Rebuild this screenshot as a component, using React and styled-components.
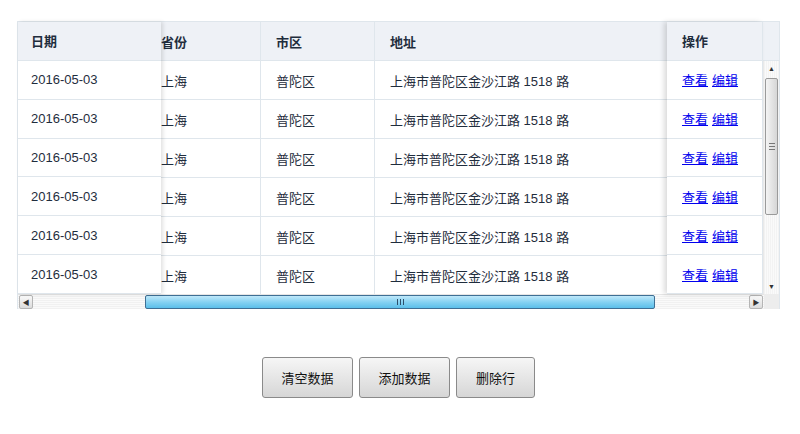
import React from "react"
import styled, { createGlobalStyle } from "styled-components"

const GlobalStyle = createGlobalStyle`
    body {
        margin: 0;
        background: #fff;
        font-family: "Liberation Sans", "Noto Sans CJK SC", sans-serif;
        color: #1f2d3d;
    }
`

const Page = styled.div`
    padding: 21px 20px 0 17px;
`

const Table = styled.div`
    width: 763px;
    box-sizing: border-box;
    border: 1px solid #dfe6ec;
    border-bottom: none;
    display: flex;
    flex-direction: column;
    font-size: 13px;
`

const Main = styled.div`
    display: flex;
    height: 272px;
`

const Column = styled.div`
    display: flex;
    flex-direction: column;
    flex: 0 0 ${p => p.$width}px;
    width: ${p => p.$width}px;
    background: #fff;
    position: relative;
    z-index: 1;
    overflow: hidden;
    box-shadow: ${p => p.$shadow === "right" ? "2px 0 4px rgba(0,0,0,0.12)" : p.$shadow === "left" ? "-3px 0 5px rgba(0,0,0,0.14)" : "none"};
`

const Middle = styled.div`
    flex: 1;
    overflow: hidden;
`

const Scrolled = styled.div`
    display: flex;
    margin-left: -15px;
    width: max-content;
`

const HeadCell = styled.div`
    height: 39px;
    box-sizing: border-box;
    background: #eef1f6;
    border-bottom: 1px solid #dfe6ec;
    border-right: ${p => p.$noRight ? "none" : "1px solid #dfe6ec"};
    padding: 0 ${p => p.$padR ?? 15}px 0 ${p => p.$padL ?? 15}px;
    display: flex;
    align-items: center;
    font-weight: bold;
    white-space: nowrap;
`

const Cell = styled.div`
    height: 39px;
    box-sizing: border-box;
    border-bottom: 1px solid #dfe6ec;
    border-right: ${p => p.$noRight ? "none" : "1px solid #dfe6ec"};
    padding: 0 ${p => p.$padR ?? 15}px 0 ${p => p.$padL ?? 15}px;
    display: flex;
    align-items: center;
    white-space: nowrap;
`

const Link = styled.a`
    color: #0000ee;
    text-decoration: underline;
    margin-right: 4px;
    cursor: pointer;
`

const Gutter = styled.div`
    flex: 0 0 15px;
    display: flex;
    flex-direction: column;
`

const GutterHead = styled.div`
    height: 39px;
    flex: 0 0 39px;
    box-sizing: border-box;
    background: #eef1f6;
    border-bottom: 1px solid #dfe6ec;
`

const VTrack = styled.div`
    flex: 1;
    display: flex;
    flex-direction: column;
    background: repeating-linear-gradient(90deg, #f3f3f3 0 1px, #fafafa 1px 2px);
    border-left: 1px solid #ececec;
`

const ArrowBtn = styled.div`
    flex: 0 0 ${p => p.$size}px;
    height: ${p => p.$size}px;
    width: ${p => p.$size}px;
    display: flex;
    align-items: center;
    justify-content: center;
    font-size: 7px;
    color: #333;
    box-sizing: border-box;
    ${p => p.$boxed && `
        border: 1px solid #b5b5b5;
        border-radius: 2px;
        background: linear-gradient(#fafafa, #dcdcdc);
        margin: 0 1px;
    `}
`

const VThumb = styled.div`
    margin: 2px 1px 0;
    height: 137px;
    box-sizing: border-box;
    border: 1px solid #9a9a9a;
    border-radius: 2px;
    background: linear-gradient(90deg, #f4f4f4, #d6d6d6);
    display: flex;
    align-items: center;
    justify-content: center;
`

const VGrip = styled.div`
    width: 6px;
    height: 5px;
    border-top: 1px solid #777;
    border-bottom: 1px solid #777;
    position: relative;
    &::after {
        content: "";
        position: absolute;
        left: 0;
        right: 0;
        top: 2px;
        border-top: 1px solid #777;
    }
`

const Spacer = styled.div`
    flex: 1;
`

const HRow = styled.div`
    display: flex;
    height: 15px;
`

const HTrack = styled.div`
    flex: 1;
    display: flex;
    align-items: center;
    background: repeating-linear-gradient(0deg, #f1f1f1 0 1px, #fafafa 1px 2px);
    border-top: 1px solid #e6e6e6;
`

const HThumb = styled.div`
    margin-left: 111px;
    width: 510px;
    height: 14px;
    box-sizing: border-box;
    border: 1px solid #3e6f94;
    border-radius: 2px;
    background: linear-gradient(#bfe8fa, #86d2f2 50%, #5bbfea);
    display: flex;
    align-items: center;
    justify-content: center;
`

const HGrip = styled.div`
    width: 5px;
    height: 6px;
    border-left: 1px solid #2c4f6b;
    border-right: 1px solid #2c4f6b;
    position: relative;
    &::after {
        content: "";
        position: absolute;
        top: 0;
        bottom: 0;
        left: 2px;
        border-left: 1px solid #2c4f6b;
    }
`

const Corner = styled.div`
    flex: 0 0 15px;
    background: #ededed;
`

const Buttons = styled.div`
    display: flex;
    justify-content: center;
    gap: 6px;
    margin-top: 48px;
`

const Button = styled.button`
    height: 41px;
    width: ${p => p.$width}px;
    padding: 0;
    font-family: "Liberation Sans", "Noto Sans CJK SC", sans-serif;
    font-size: 13px;
    color: #111;
    border: 1px solid #8a8a8a;
    border-radius: 3px;
    background: linear-gradient(#f6f6f6, #e6e6e6 50%, #d6d6d6);
    cursor: pointer;
`

const rows = Array.from({ length: 6 }, () => ({
    date: "2016-05-03",
    province: "上海",
    city: "普陀区",
    address: "上海市普陀区金沙江路 1518 路",
}))

const middleCols = [
    { key: "province", title: "省份", width: 115 },
    { key: "city", title: "市区", width: 114 },
    { key: "address", title: "地址", width: 300 },
]

export default function App() {
    return (
        <Page>
            <GlobalStyle />
            <Table>
                <Main>
                    <Column $width={143} $shadow="right">
                        <HeadCell $noRight $padL={13}>日期</HeadCell>
                        {rows.map((r, i) => <Cell key={i} $noRight $padL={13}>{r.date}</Cell>)}
                    </Column>
                    <Middle>
                        <Scrolled>
                            {middleCols.map(c => (
                                <div key={c.key} style={{ width: c.width }}>
                                    <HeadCell>{c.title}</HeadCell>
                                    {rows.map((r, i) => <Cell key={i}>{r[c.key]}</Cell>)}
                                </div>
                            ))}
                        </Scrolled>
                    </Middle>
                    <Column $width={96} $shadow="left">
                        <HeadCell $padR={0} $padL={15}>操作</HeadCell>
                        {rows.map((r, i) => (
                            <Cell key={i} $padR={0} $padL={15}>
                                <Link>查看</Link>
                                <Link>编辑</Link>
                            </Cell>
                        ))}
                    </Column>
                    <Gutter>
                        <GutterHead />
                        <VTrack>
                            <ArrowBtn $size={15}>▲</ArrowBtn>
                            <VThumb><VGrip /></VThumb>
                            <Spacer />
                            <ArrowBtn $size={15}>▼</ArrowBtn>
                        </VTrack>
                    </Gutter>
                </Main>
                <HRow>
                    <HTrack>
                        <ArrowBtn $size={14} $boxed>◀</ArrowBtn>
                        <HThumb><HGrip /></HThumb>
                        <Spacer />
                        <ArrowBtn $size={14} $boxed>▶</ArrowBtn>
                    </HTrack>
                    <Corner />
                </HRow>
            </Table>
            <Buttons>
                <Button $width={91}>清空数据</Button>
                <Button $width={91}>添加数据</Button>
                <Button $width={79}>删除行</Button>
            </Buttons>
        </Page>
    )
}
